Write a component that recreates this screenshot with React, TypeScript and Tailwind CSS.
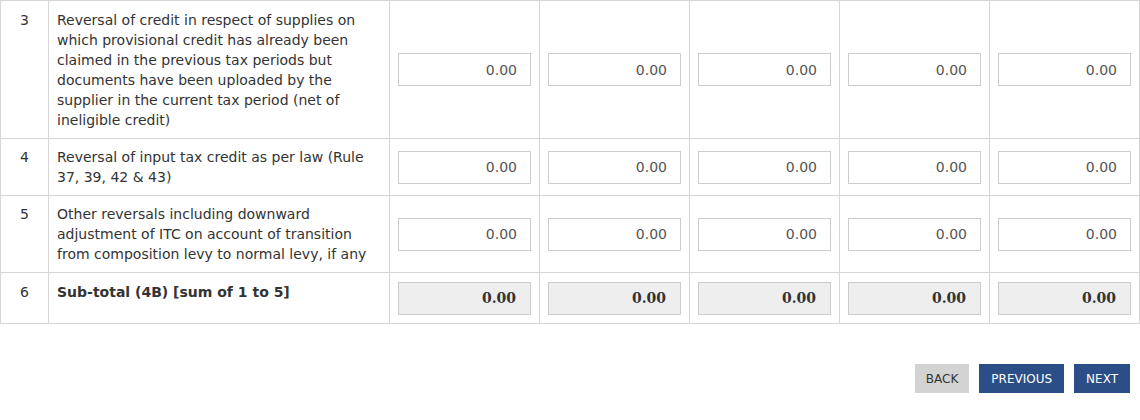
const ROWS = [
  {
    no: '3',
    label:
      'Reversal of credit in respect of supplies on which provisional credit has already been claimed in the previous tax periods but documents have been uploaded by the supplier in the current tax period (net of ineligible credit)',
  },
  { no: '4', label: 'Reversal of input tax credit as per law (Rule 37, 39, 42 & 43)' },
  {
    no: '5',
    label:
      'Other reversals including downward adjustment of ITC on account of transition from composition levy to normal levy, if any',
  },
]

const COLS = [0, 1, 2, 3, 4]

export default function App() {
  return (
    <div className="h-[420px] w-[1140px] bg-white font-['DejaVu_Sans',Verdana,sans-serif] text-[14px] leading-5 text-[#333]">
      <table className="w-[1140px] table-fixed border-collapse">
        <colgroup>
          <col className="w-[48px]" />
          <col className="w-[341px]" />
          {COLS.map((c) => (
            <col key={c} className="w-[150px]" />
          ))}
        </colgroup>
        <tbody>
          {ROWS.map((row, i) => (
            <tr key={row.no}>
              <td
                className={`border border-[#d6d6d6] px-2 pb-2 text-center align-top ${
                  i === 0 ? 'pt-[9px]' : 'pt-2'
                }`}
              >
                {row.no}
              </td>
              <td className={`border border-[#d6d6d6] px-2 pb-2 align-top ${i === 0 ? 'pt-[9px]' : 'pt-2'}`}>
                {row.label}
              </td>
              {COLS.map((c) => (
                <td key={c} className="border border-[#d6d6d6] px-2 align-middle">
                  <input
                    readOnly
                    value="0.00"
                    className="block h-[33px] w-full border border-[#cccccc] bg-white px-[13px] text-right font-['DejaVu_Sans',sans-serif] text-[14px] text-[#555] outline-none"
                  />
                </td>
              ))}
            </tr>
          ))}
          <tr className="h-[51px]">
            <td className="border border-[#d6d6d6] px-2 pt-[9px] pb-2 text-center align-top">6</td>
            <td className="border border-[#d6d6d6] px-2 pt-[9px] pb-2 align-top font-bold">
              Sub-total (4B) [sum of 1 to 5]
            </td>
            {COLS.map((c) => (
              <td key={c} className="border border-[#d6d6d6] px-2 py-2 align-middle">
                <input
                  readOnly
                  disabled
                  value="0.00"
                  className="block h-[33px] w-full border border-[#cccccc] bg-[#eeeeee] px-[14px] text-right font-['DejaVu_Serif',Georgia,serif] text-[14px] font-bold text-[#333]"
                />
              </td>
            ))}
          </tr>
        </tbody>
      </table>

      <div className="mt-[40px] flex justify-end gap-[10px] pr-[10px]">
        <button className="h-[29px] bg-[#d3d3d3] px-[11px] text-[12px] text-[#333]">BACK</button>
        <button className="h-[29px] bg-[#2c4e86] px-[12px] text-[12px] font-medium text-white">PREVIOUS</button>
        <button className="h-[29px] bg-[#2c4e86] px-[12px] text-[12px] font-medium text-white">NEXT</button>
      </div>
    </div>
  )
}
